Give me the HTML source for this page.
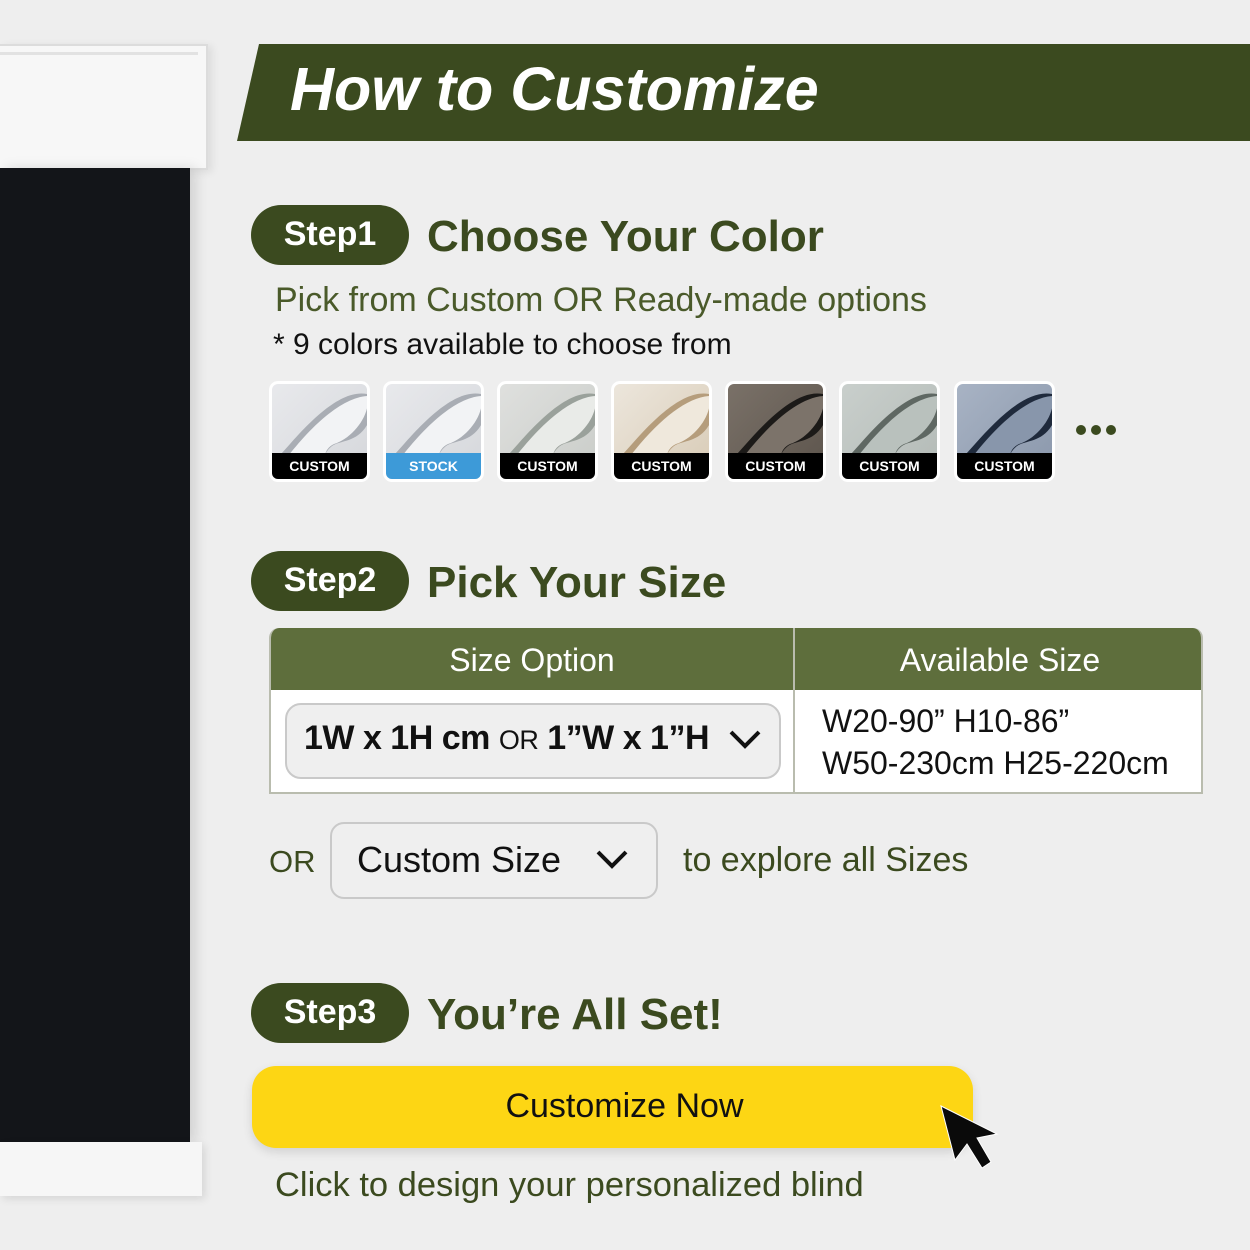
<!DOCTYPE html>
<html><head><meta charset="utf-8"><style>
*{margin:0;padding:0;box-sizing:border-box}
body{width:1250px;height:1250px;background:#eeeeee;position:relative;overflow:hidden;font-family:"Liberation Sans",sans-serif}
.a{position:absolute;white-space:nowrap}
.pill{position:absolute;left:251px;width:158px;height:60px;border-radius:30px;background:#3b4a1f;color:#fff;font-weight:bold;font-size:34px;text-align:center;line-height:58px}
.h{position:absolute;left:427px;color:#3b4a1f;font-weight:bold;font-size:44px;white-space:nowrap}
.sw{position:absolute;top:381px;width:101px;height:101px;border-radius:9px;border:3px solid #fff;overflow:hidden}
.sw .l{position:absolute;left:0;right:0;bottom:0;height:26px;background:#000;color:#fff;font-weight:bold;font-size:14px;text-align:center;line-height:26px}
.sw svg{position:absolute;left:0;top:0}
</style></head><body>
<div class="a" style="left:0;top:44px;width:208px;height:126px;background:#f7f7f7;border:2px solid #dcdcdc;border-left:none;box-shadow:4px 2px 8px rgba(0,0,0,.08)"></div>
<div class="a" style="left:0;top:52px;width:198px;height:3px;background:#e2e2e2"></div>
<div class="a" style="left:0;top:168px;width:190px;height:975px;background:#131519;box-shadow:6px 0 12px rgba(0,0,0,.12)"></div>
<div class="a" style="left:0;top:1142px;width:202px;height:54px;background:#f6f6f6;box-shadow:3px 3px 8px rgba(0,0,0,.1)"></div>
<svg class="a" style="left:237px;top:44px" width="1013" height="97"><polygon points="22,0 1013,0 1013,97 0,97" fill="#3b4a1f"/></svg>
<div class="a" style="left:290px;top:54px;color:#fff;font-weight:bold;font-style:italic;font-size:61px">How to Customize</div>
<div class="pill" style="top:205px">Step1</div>
<div class="h" style="top:212px">Choose Your Color</div>
<div class="a" style="left:275px;top:281px;font-size:34px;color:#4a5a2a">Pick from Custom OR Ready-made options</div>
<div class="a" style="left:273px;top:328px;font-size:30px;color:#111">* 9 colors available to choose from</div>

<div class="sw" style="left:269px;background:linear-gradient(135deg,#e8e9ec,#d5d7db)"><svg width="101" height="80"><path d="M0,80 L18,60 C40,35 70,5 95,10 L100,30 C90,60 70,55 60,62 C50,70 55,75 45,80Z" fill="#a9adb4"/><path d="M10,80 C40,40 70,14 95,12 C100,30 80,55 62,60 C50,66 55,75 48,80Z" fill="#f2f3f5"/></svg><div class="l">CUSTOM</div></div>
<div class="sw" style="left:383px;background:linear-gradient(135deg,#e8e9ec,#d5d7db)"><svg width="101" height="80"><path d="M0,80 L18,60 C40,35 70,5 95,10 L100,30 C90,60 70,55 60,62 C50,70 55,75 45,80Z" fill="#a9adb4"/><path d="M10,80 C40,40 70,14 95,12 C100,30 80,55 62,60 C50,66 55,75 48,80Z" fill="#f2f3f5"/></svg><div class="l" style="background:#3d9ad8">STOCK</div></div>
<div class="sw" style="left:497px;background:linear-gradient(135deg,#dfe0de,#c9ccc8)"><svg width="101" height="80"><path d="M0,80 L18,60 C40,35 70,5 95,10 L100,30 C90,60 70,55 60,62 C50,70 55,75 45,80Z" fill="#9aa19b"/><path d="M10,80 C40,40 70,14 95,12 C100,30 80,55 62,60 C50,66 55,75 48,80Z" fill="#e9ebe8"/></svg><div class="l">CUSTOM</div></div>
<div class="sw" style="left:611px;background:linear-gradient(135deg,#ece6dc,#d8cbb6)"><svg width="101" height="80"><path d="M0,80 L18,60 C40,35 70,5 95,10 L100,30 C90,60 70,55 60,62 C50,70 55,75 45,80Z" fill="#b59d7c"/><path d="M10,80 C40,40 70,14 95,12 C100,30 80,55 62,60 C50,66 55,75 48,80Z" fill="#efe8dc"/></svg><div class="l">CUSTOM</div></div>
<div class="sw" style="left:725px;background:linear-gradient(135deg,#7a7168,#5c544c)"><svg width="101" height="80"><path d="M0,80 L18,60 C40,35 70,5 95,10 L100,30 C90,60 70,55 60,62 C50,70 55,75 45,80Z" fill="#1c1a18"/><path d="M10,80 C40,40 70,14 95,12 C100,30 80,55 62,60 C50,66 55,75 48,80Z" fill="#7c736a"/></svg><div class="l">CUSTOM</div></div>
<div class="sw" style="left:839px;background:linear-gradient(135deg,#c9cfcc,#b3bab6)"><svg width="101" height="80"><path d="M0,80 L18,60 C40,35 70,5 95,10 L100,30 C90,60 70,55 60,62 C50,70 55,75 45,80Z" fill="#5f6863"/><path d="M10,80 C40,40 70,14 95,12 C100,30 80,55 62,60 C50,66 55,75 48,80Z" fill="#b9c1bd"/></svg><div class="l">CUSTOM</div></div>
<div class="sw" style="left:954px;background:linear-gradient(135deg,#a8b3c4,#8a97ab)"><svg width="101" height="80"><path d="M0,80 L18,60 C40,35 70,5 95,10 L100,30 C90,60 70,55 60,62 C50,70 55,75 45,80Z" fill="#1f2a3c"/><path d="M10,80 C40,40 70,14 95,12 C100,30 80,55 62,60 C50,66 55,75 48,80Z" fill="#8896ab"/></svg><div class="l">CUSTOM</div></div>
<svg class="a" style="left:1075px;top:423px" width="42" height="14"><circle cx="6" cy="7" r="5" fill="#3b4a1f"/><circle cx="21" cy="7" r="5" fill="#3b4a1f"/><circle cx="36" cy="7" r="5" fill="#3b4a1f"/></svg>

<div class="pill" style="top:551px">Step2</div>
<div class="h" style="top:558px">Pick Your Size</div>
<div class="a" style="left:269px;top:628px;width:934px;height:166px;background:#fff;border:2px solid #b9bcae;border-top:none;border-radius:10px 10px 0 0;overflow:hidden">
 <div class="a" style="left:0;top:0;width:934px;height:62px;background:#5e6e3c"></div>
 <div class="a" style="left:522px;top:0;width:2px;height:166px;background:#b9bcae"></div>
 <div class="a" style="left:0;top:14px;width:522px;text-align:center;color:#fff;font-size:32px">Size Option</div>
 <div class="a" style="left:524px;top:14px;width:410px;text-align:center;color:#fff;font-size:32px">Available Size</div>
 <div class="a" style="left:551px;top:72px;font-size:32px;color:#111;line-height:42px">W20-90” H10-86”<br>W50-230cm H25-220cm</div>
</div>
<div class="a" style="left:285px;top:703px;width:496px;height:76px;border:2px solid #c9c9c9;border-radius:16px;background:#efefef"></div>
<div class="a" style="left:304px;top:719px;font-size:34px;font-weight:bold;color:#111;letter-spacing:-0.5px">1W x 1H cm <span style="font-weight:normal;font-size:27px">OR</span> 1”W x 1”H</div>
<svg class="a" style="left:728px;top:729px" width="34" height="22"><path d="M3,3 L17,17 L31,3" stroke="#111" stroke-width="4" fill="none"/></svg>

<div class="a" style="left:269px;top:844px;font-size:31px;color:#3b4a1f">OR</div>
<div class="a" style="left:330px;top:822px;width:328px;height:77px;border:2px solid #c9c9c9;border-radius:14px;background:#efefef"></div>
<div class="a" style="left:357px;top:839px;font-size:36px;color:#111">Custom Size</div>
<svg class="a" style="left:595px;top:849px" width="34" height="22"><path d="M3,3 L17,17 L31,3" stroke="#111" stroke-width="4" fill="none"/></svg>
<div class="a" style="left:683px;top:841px;font-size:34px;color:#3b4a1f">to explore all Sizes</div>

<div class="pill" style="top:983px">Step3</div>
<div class="h" style="top:990px">You’re All Set!</div>
<div class="a" style="left:252px;top:1066px;width:721px;height:82px;border-radius:24px;background:#fdd614;box-shadow:0 4px 10px rgba(0,0,0,.12)"></div>
<div class="a" style="left:252px;top:1087px;width:745px;text-align:center;font-size:34px;color:#111">Customize Now</div>
<svg class="a" style="left:935px;top:1100px" width="70" height="75"><path d="M6,6 L20,60 L32,44 L47,68 L56,62 L42,38 L62,34 Z" fill="#0a0a0a" stroke="#fff" stroke-width="1"/></svg>
<div class="a" style="left:275px;top:1166px;font-size:34.5px;color:#3b4a1f">Click to design your personalized blind</div>
</body></html>
